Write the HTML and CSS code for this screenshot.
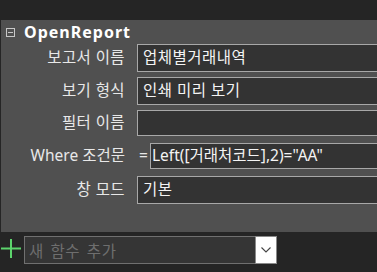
FILE: index.html
```html
<!DOCTYPE html>
<html lang="ko">
<head>
<meta charset="utf-8">
<link rel="stylesheet" href="styles.css">
</head>
<body>
<div class="topbar"></div>
<section class="panel">
  <div class="head">
    <span class="collapse"></span>
    <span class="title">OpenReport</span>
  </div>
  <div class="row r1">
    <div class="label">보고서 이름</div>
    <div class="field">업체별거래내역</div>
  </div>
  <div class="row r2">
    <div class="label">보기 형식</div>
    <div class="field">인쇄 미리 보기</div>
  </div>
  <div class="row r3">
    <div class="label">필터 이름</div>
    <div class="field"></div>
  </div>
  <div class="row r4">
    <div class="label">Where 조건문</div>
    <div class="eq">=</div>
    <div class="field">Left([거래처코드],2)="AA"</div>
  </div>
  <div class="row r5">
    <div class="label">창 모드</div>
    <div class="field">기본</div>
  </div>
</section>
<div class="addbar">
  <svg class="plus" width="20" height="20" viewBox="0 0 20 20"><path d="M10 1v19M0 10.5h20" stroke="#5cd46c" stroke-width="2" fill="none"/></svg>
  <div class="combo">
    <span class="placeholder">새 함수 추가</span>
    <span class="drop"><svg width="10" height="6" viewBox="0 0 10 6"><path d="M0.5 0.5l4.5 4.5 4.5-4.5" stroke="#444" stroke-width="1.1" fill="none"/></svg></span>
  </div>
</div>
</body>
</html>
```

FILE: styles.css
```css
* { box-sizing: border-box; }
html, body { margin: 0; padding: 0; }
body {
  width: 377px;
  height: 272px;
  background: #252525;
  font-family: "Noto Sans", "Noto Sans CJK KR", sans-serif;
  font-size: 15.5px;
  color: #f0f0f0;
  overflow: hidden;
}
.topbar { height: 20px; }
.panel {
  margin-left: 1px;
  background: #505050;
  height: 212px;
  display: flex;
  flex-direction: column;
}
.head {
  height: 24px;
  display: flex;
  align-items: center;
  padding-left: 5px;
}
.collapse {
  width: 9px;
  height: 9px;
  border: 1px solid #c8c8c8;
  position: relative;
  margin-top: 1px;
}
.collapse::after {
  content: "";
  position: absolute;
  left: 1px;
  right: 1px;
  top: 3px;
  height: 1px;
  background: #c8c8c8;
}
.title {
  margin-left: 9px;
  font-weight: bold;
  font-size: 16px;
  letter-spacing: 1px;
  color: #ffffff;
  line-height: 1;
}
.row {
  display: flex;
  align-items: stretch;
  line-height: 1;
}
.r1 { height: 28px; }
.r2 { height: 28px; margin-top: 5px; }
.r3 { height: 26px; margin-top: 5px; }
.r4 { height: 26px; margin-top: 7px; }
.r5 { height: 28px; margin-top: 7px; }
.label {
  width: 136px;
  flex: none;
  padding-right: 12px;
  display: flex;
  align-items: center;
  justify-content: flex-end;
  color: #e8e8e8;
  white-space: nowrap;
  letter-spacing: 0.4px;
}
.r4 .label { letter-spacing: 0; }
.eq {
  flex: none;
  display: flex;
  align-items: center;
  color: #e8e8e8;
  margin-left: -1px;
  width: 14px;
  padding-left: 3px;
}
.field {
  flex: 1;
  background: #333333;
  border: 1px solid #a8a8a8;
  border-right: none;
  padding-left: 5px;
  display: flex;
  align-items: center;
  color: #f4f4f4;
  white-space: nowrap;
  overflow: hidden;
  letter-spacing: 0.5px;
}
.r4 .field { padding-left: 1px; letter-spacing: 0; }
.addbar {
  display: flex;
  align-items: flex-start;
  padding-top: 4px;
  height: 40px;
}
.plus { margin-left: 1px; margin-top: 2px; flex: none; }
.combo {
  margin-left: 3px;
  width: 253px;
  height: 28px;
  border: 1px solid #707070;
  background: #353535;
  display: flex;
  align-items: center;
}
.placeholder {
  flex: 1;
  padding-left: 4px;
  color: #6e6e6e;
  letter-spacing: 0.6px;
  word-spacing: 2px;
}
.drop {
  width: 22px;
  height: 28px;
  margin: -1px -1px -1px 0;
  background: #ffffff;
  border: 1px solid #8a8a8a;
  display: flex;
  align-items: center;
  justify-content: center;
}
```
